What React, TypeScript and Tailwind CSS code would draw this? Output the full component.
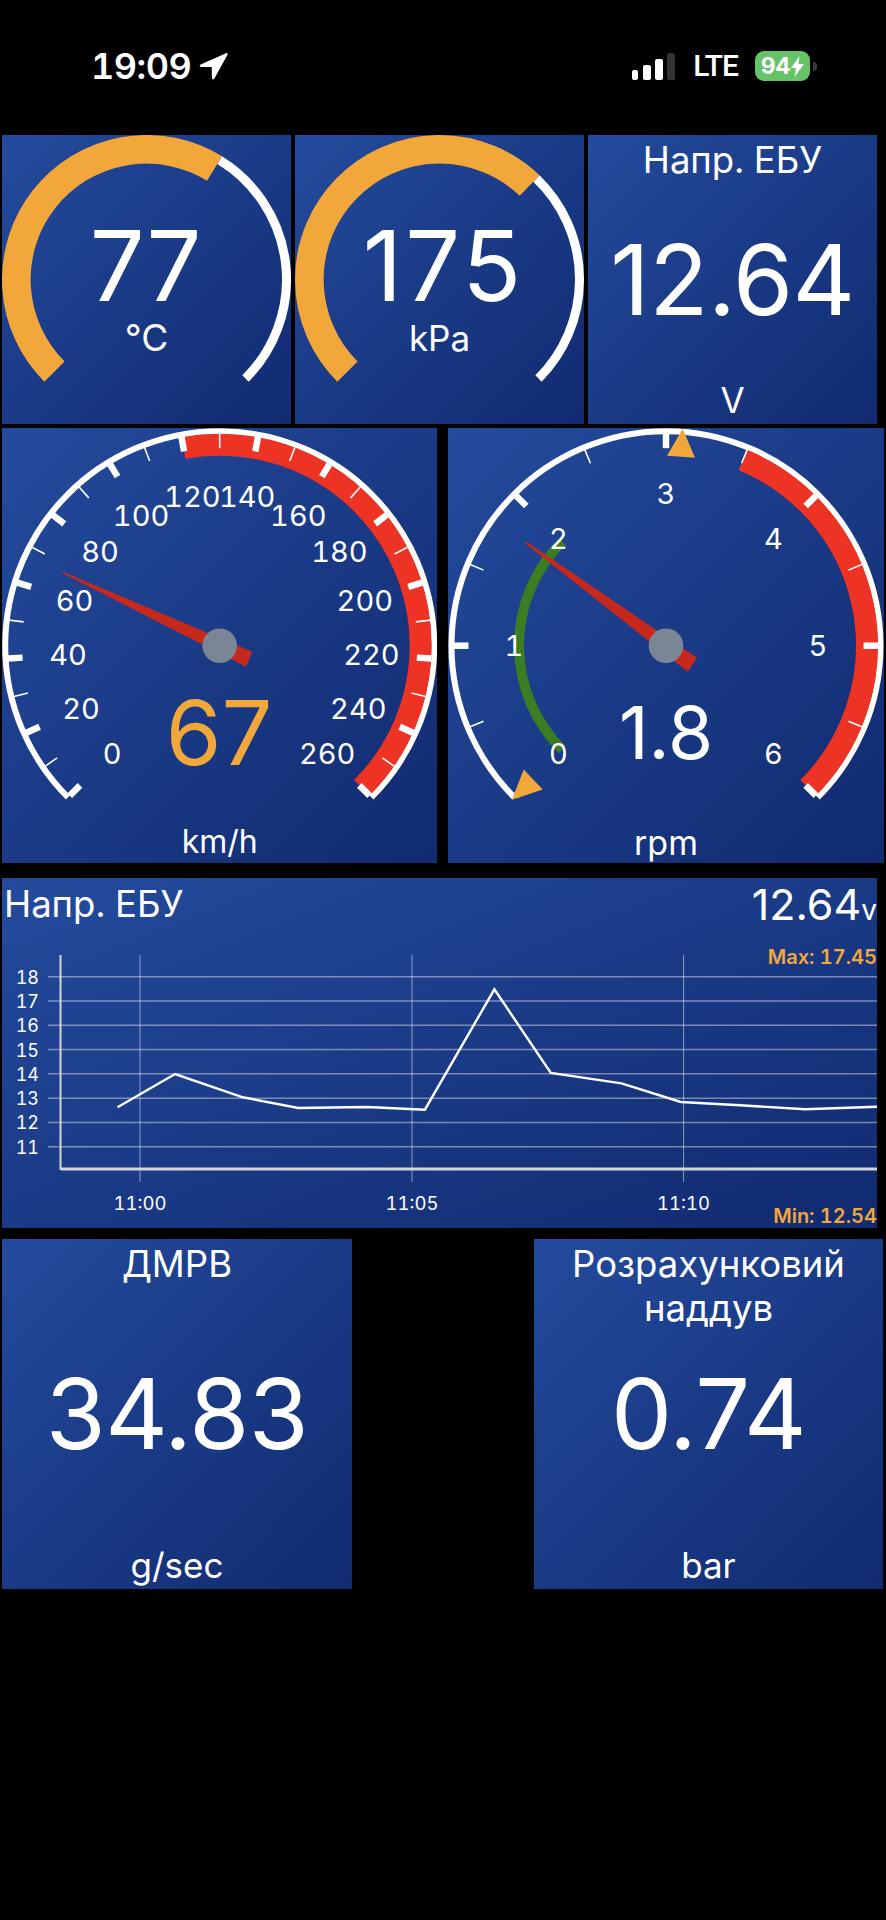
const CARD = 'bg-linear-to-br from-[#244b9d] to-[#112a70] text-white'

// angle in degrees, 0 = up, clockwise
function polar(cx: number, cy: number, r: number, deg: number) {
  const a = (deg * Math.PI) / 180
  return { x: cx + r * Math.sin(a), y: cy - r * Math.cos(a) }
}

function arc(cx: number, cy: number, r: number, from: number, to: number) {
  const s = polar(cx, cy, r, from)
  const e = polar(cx, cy, r, to)
  const large = to - from > 180 ? 1 : 0
  return `M${s.x} ${s.y}A${r} ${r} 0 ${large} 1 ${e.x} ${e.y}`
}

function ArcGauge({ value, unit, end, unitSize, valueX = 143.5, valueClass = '' }: { value: string; unit: string; end: number; unitSize: number; valueX?: number; valueClass?: string }) {
  const c = 144.5
  return (
    <div className={`w-[289px] h-[289px] overflow-hidden ${CARD}`}>
      <svg width="289" height="289" viewBox="0 0 289 289" className="block">
        <path d={arc(c, c, 140, end, 135)} fill="none" stroke="#fff" strokeWidth="9" />
        <path d={arc(c, c, 130.2, -135, end)} fill="none" stroke="#f2a73b" strokeWidth="28.6" />
        <text x={valueX} y="165.7" textAnchor="middle" fontSize="97" fill="#fff" className={`normal-nums ${valueClass}`}>{value}</text>
        <text x={c} y="215.7" textAnchor="middle" fontSize={unitSize} fill="#fff">{unit}</text>
      </svg>
    </div>
  )
}

type DialProps = {
  width: number
  cx: number
  labels: string[]
  intervals: number
  redFrom: number
  needle: number[][]
  unit: string
  unitY: number
  unitSize: number
  children?: React.ReactNode
}

function Dial({ width, cx, labels, intervals, redFrom, needle, unit, unitY, unitSize, children }: DialProps) {
  const cy = 217.7
  const step = 270 / intervals
  const ticks = Array.from({ length: intervals + 1 }, (_, i) => i)
  const labelStep = 270 / (labels.length - 1)
  return (
    <div className={`h-[435px] overflow-hidden ${CARD}`} style={{ width }}>
      <svg width={width} height="435" viewBox={`0 0 ${width} 435`} className="block">
        <path d={arc(cx, cy, 214.5, -135, 135)} fill="none" stroke="#fff" strokeWidth="6" />
        <path d={arc(cx, cy, 201, redFrom, 135)} fill="none" stroke="#ec3324" strokeWidth="22" />
        {ticks.map((i) => {
          const deg = -135 + i * step
          const a = polar(cx, cy, 197.5, deg)
          const b = polar(cx, cy, 212, deg)
          return (
            <line key={i} x1={a.x} y1={a.y} x2={b.x} y2={b.y} stroke="#fff" strokeWidth={i % 2 === 0 ? 6.5 : 1.6} />
          )
        })}
        {children}
        {labels.map((t, i) => {
          const p = polar(cx, cy, 152, -135 + i * labelStep)
          return (
            <text key={t} x={p.x} y={p.y + 10.5} textAnchor="middle" fontSize="29" fill="#fff">{t}</text>
          )
        })}
        <polygon points={needle.map((p) => p.join(',')).join(' ')} fill="#c6291c" />
        <circle cx={cx} cy={cy} r="17.3" fill="#7a8596" />
        <text x={cx} y={unitY} textAnchor="middle" fontSize={unitSize} fill="#fff">{unit}</text>
      </svg>
    </div>
  )
}

function ValueCard({ title, value, unit, size }: { title: string; value: string; unit: string; size: string }) {
  return (
    <div className={`grid grid-rows-[1fr_auto_1fr] text-center py-[3px] ${size} ${CARD}`}>
      <div className="text-[36.5px] leading-[44px]">{title}</div>
      <div className="text-[97px] leading-[100px] normal-nums tracking-[-0.5px]">{value}</div>
      <div className="text-[35px] leading-[42px] self-end">{unit}</div>
    </div>
  )
}

const yTicks = [18, 17, 16, 15, 14, 13, 12, 11]
const xTicks = [
  { x: 138, t: '11:00' },
  { x: 410, t: '11:05' },
  { x: 681.6, t: '11:10' },
]
const points = '115.5,229.3 173.1,196 240.9,219.3 296.3,230 365.2,229 422.9,231.7 492.4,111.3 548.8,195 619.5,205.3 678.8,224 738,227.3 803,231.3 875,228.7'

function Chart() {
  return (
    <div className={`w-[875px] h-[350px] ${CARD}`}>
      <div className="flex items-start justify-between pl-[2px] h-[70px]">
        <span className="text-[36.5px] leading-[44px] pt-[4px]">Напр. ЕБУ</span>
        <span className="text-[43px] leading-[52px] normal-nums">
          12.64<span className="text-[28px]">v</span>
        </span>
      </div>
      <svg width="875" height="280" viewBox="0 70 875 280" className="block">
        {yTicks.map((v, i) => {
          const y = 98.7 + i * 24.29
          return (
            <g key={v}>
              <line x1="46" y1={y} x2="875" y2={y} stroke="#fff" strokeOpacity="0.42" strokeWidth="1.5" />
              <text x="37" y={y + 7} textAnchor="end" fontSize="18" fill="#fff">{v}</text>
            </g>
          )
        })}
        {xTicks.map((t) => (
          <g key={t.t}>
            <line x1={t.x} y1="77" x2={t.x} y2="304" stroke="#fff" strokeOpacity="0.5" />
            <text x={t.x} y="332" textAnchor="middle" fontSize="18.5" fill="#fff">{t.t}</text>
          </g>
        ))}
        <line x1="58.5" y1="77" x2="58.5" y2="292" stroke="#d4d6da" strokeWidth="2" />
        <line x1="59" y1="291" x2="875" y2="291" stroke="#d4d6da" strokeWidth="3" />
        <polyline points={points} fill="none" stroke="#fff" strokeWidth="2.4" />
        <text x="875" y="86" textAnchor="end" fontSize="20" fontWeight="600" fill="#f2a73b">Max: 17.45</text>
        <text x="875" y="345" textAnchor="end" fontSize="20" fontWeight="600" fill="#f2a73b">Min: 12.54</text>
      </svg>
    </div>
  )
}

function StatusBar() {
  return (
    <div className="h-[135px] flex items-start justify-between pl-[89px] pr-[69px] pt-[46px] text-white">
      <div className="flex items-center gap-[7px]">
        <span className="text-[36px] leading-[40px] font-semibold tracking-[-0.5px]">19:09</span>
        <svg width="30" height="30" viewBox="0 0 30 30" className="block">
          <path d="M28 2.2 2.6 13.6c-1.4.7-1 2.4.5 2.4l10.6.1.2 10.9c0 1.6 1.8 1.9 2.5.5L29.6 3.6c.4-1-.6-1.9-1.6-1.4Z" fill="#fff" />
        </svg>
      </div>
      <div className="flex items-center h-[40px]">
        <div className="flex items-end gap-[4px] mr-[18px]">
          <div className="w-[6px] h-[10px] rounded-[2px] bg-white" />
          <div className="w-[8px] h-[15px] ml-[1px] rounded-[2px] bg-white" />
          <div className="w-[8px] h-[21px] rounded-[2px] bg-white" />
          <div className="w-[8px] h-[27px] rounded-[2px] bg-[#333]" />
        </div>
        <span className="font-[Roboto,sans-serif] text-[30px] font-medium leading-[40px] mr-[17px] tracking-[-1px]">LTE</span>
        <div className="w-[55px] h-[30px] rounded-[9px] bg-[#65c466] flex items-center justify-center gap-[1px] text-[23px] font-bold leading-none">
          94
          <svg width="13" height="21" viewBox="0 0 13 21" className="block">
            <path d="M8.5 0 0 12h5l-1.5 9L13 8H7.5L8.5 0Z" fill="#fff" />
          </svg>
        </div>
        <div className="w-[4px] h-[9px] ml-[3px] rounded-r-[4px] bg-[#3a3a3a]" />
      </div>
    </div>
  )
}

export default function App() {
  const cy = 217.7
  return (
    <div className="min-h-[1920px] bg-black font-[Inter,sans-serif] tabular-nums pl-[2px]">
      <StatusBar />
      <div className="flex gap-[4px]">
        <ArcGauge value="77" unit="°C" end={31.5} unitSize={37} />
        <ArcGauge value="175" unit="kPa" end={43.8} unitSize={35} valueX={148.5} valueClass="tracking-[3px]" />
        <ValueCard title="Напр. ЕБУ" value="12.64" unit="V" size="w-[289px] h-[289px]" />
      </div>
      <div className="flex gap-[11px] mt-[4px]">
        <Dial
          width={435}
          cx={217.7}
          labels={['0', '20', '40', '60', '80', '100', '120', '140', '160', '180', '200', '220', '240', '260']}
          intervals={26}
          redFrom={-10.4}
          needle={[[59.7, 144.7], [61.7, 144], [250.3, 223.7], [244, 238.7]]}
          unit="km/h"
          unitY={425}
          unitSize={32}
        >
          <text x="217" y="337" textAnchor="middle" fontSize="90" fill="#f2a73b" className="normal-nums">67</text>
        </Dial>
        <Dial
          width={436}
          cx={218}
          labels={['0', '1', '2', '3', '4', '5', '6']}
          intervals={12}
          redFrom={22.5}
          needle={[[77, 115.3], [79, 114], [249, 229.7], [239.7, 243.7]]}
          unit="rpm"
          unitY={427}
          unitSize={34}
        >
          <path d={arc(218, cy, 147, -135, -45)} fill="none" stroke="#3a7d22" strokeWidth="10" />
          <polygon points="234.7,0.7 219,27.7 247,29.7" fill="#f2a73b" />
          <polygon points="64,371.7 75.7,341.4 94.7,361.4" fill="#f2a73b" />
          <text x="218" y="331" textAnchor="middle" fontSize="73" fill="#fff" className="normal-nums">1.8</text>
        </Dial>
      </div>
      <div className="mt-[15px]">
        <Chart />
      </div>
      <div className="flex gap-[182px] mt-[11px]">
        <ValueCard title="ДМРВ" value="34.83" unit="g/sec" size="w-[350px] h-[350px]" />
        <ValueCard title="Розрахунковий наддув" value="0.74" unit="bar" size="w-[349px] h-[350px]" />
      </div>
    </div>
  )
}
